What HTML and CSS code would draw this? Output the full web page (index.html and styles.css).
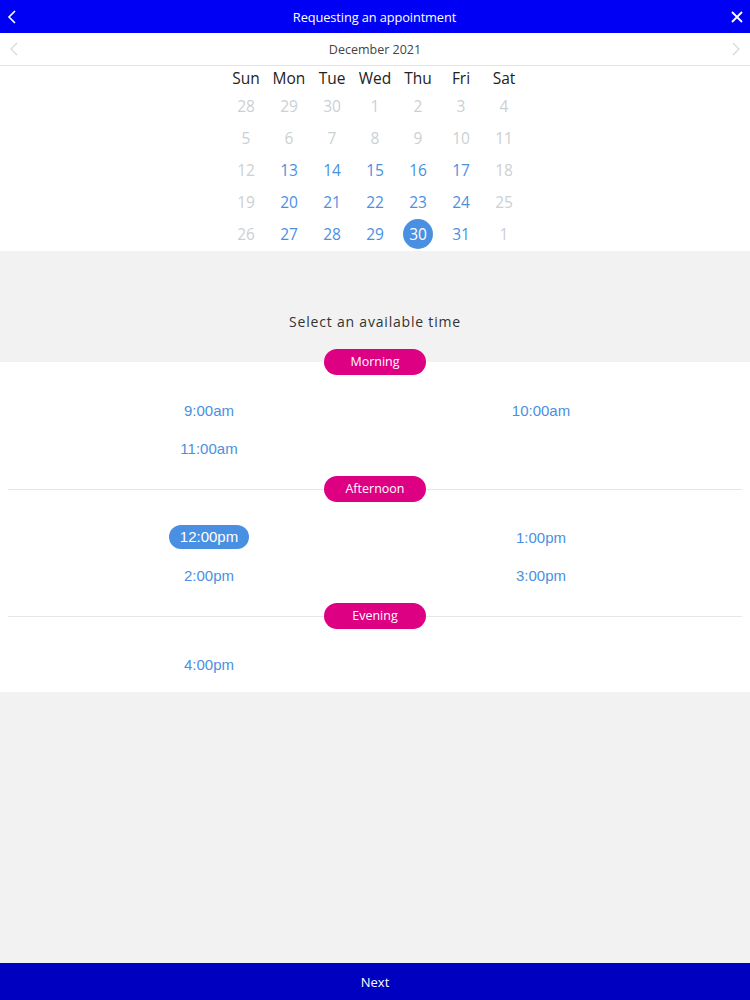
FILE: index.html
```html
<!DOCTYPE html>
<html>

<head>
    <title>Requesting an appointment</title>
    <meta charset="utf-8">
    <meta name="viewport" content="width=device-width, initial-scale=1.0">
    <link rel="stylesheet" href="styles.css">
</head>

<body>

    <header class="topbar">
        <button class="icon-btn back" aria-label="Back">
            <svg width="10" height="14" viewBox="0 0 10 14"><path d="M8 1 L2 7 L8 13" fill="none" stroke="#fff" stroke-width="1.6"/></svg>
        </button>
        <h1>Requesting an appointment</h1>
        <button class="icon-btn close" aria-label="Close">
            <svg width="12" height="12" viewBox="0 0 12 12"><path d="M1 1 L11 11 M11 1 L1 11" fill="none" stroke="#fff" stroke-width="1.8"/></svg>
        </button>
    </header>

    <div class="month-bar">
        <button class="icon-btn prev" aria-label="Previous month">
            <svg width="8" height="14" viewBox="0 0 8 14"><path d="M7 1 L1 7 L7 13" fill="none" stroke="#d3d8dc" stroke-width="1.2"/></svg>
        </button>
        <span class="month">December 2021</span>
        <button class="icon-btn next" aria-label="Next month">
            <svg width="8" height="14" viewBox="0 0 8 14"><path d="M1 1 L7 7 L1 13" fill="none" stroke="#d3d8dc" stroke-width="1.2"/></svg>
        </button>
    </div>

    <section class="calendar">
        <div class="cal-grid">
            <span class="dow">Sun</span><span class="dow">Mon</span><span class="dow">Tue</span><span class="dow">Wed</span><span class="dow">Thu</span><span class="dow">Fri</span><span class="dow">Sat</span>

            <span class="day off">28</span><span class="day off">29</span><span class="day off">30</span><span class="day off">1</span><span class="day off">2</span><span class="day off">3</span><span class="day off">4</span>
            <span class="day off">5</span><span class="day off">6</span><span class="day off">7</span><span class="day off">8</span><span class="day off">9</span><span class="day off">10</span><span class="day off">11</span>
            <span class="day off">12</span><span class="day">13</span><span class="day">14</span><span class="day">15</span><span class="day">16</span><span class="day">17</span><span class="day off">18</span>
            <span class="day off">19</span><span class="day">20</span><span class="day">21</span><span class="day">22</span><span class="day">23</span><span class="day">24</span><span class="day off">25</span>
            <span class="day off">26</span><span class="day">27</span><span class="day">28</span><span class="day">29</span><span class="day"><b class="picked">30</b></span><span class="day">31</span><span class="day off">1</span>
        </div>
    </section>

    <section class="prompt">
        <p>Select an available time</p>
    </section>

    <section class="slots">
        <div class="slot-group first">
            <div class="slot-head"><i class="line"></i><span class="period">Morning</span><i class="line"></i></div>
            <div class="slot-grid">
                <span class="time">9:00am</span>
                <span class="time">10:00am</span>
                <span class="time">11:00am</span>
            </div>
        </div>

        <div class="slot-group">
            <div class="slot-head"><i class="line"></i><span class="period">Afternoon</span><i class="line"></i></div>
            <div class="slot-grid">
                <span class="time"><b class="chosen">12:00pm</b></span>
                <span class="time">1:00pm</span>
                <span class="time">2:00pm</span>
                <span class="time">3:00pm</span>
            </div>
        </div>

        <div class="slot-group">
            <div class="slot-head"><i class="line"></i><span class="period">Evening</span><i class="line"></i></div>
            <div class="slot-grid">
                <span class="time">4:00pm</span>
            </div>
        </div>
    </section>

    <footer class="next-bar">
        <button class="next-btn">Next</button>
    </footer>

</body>

</html>
```

FILE: styles.css
```css
html,
body {
    margin: 0;
    padding: 0;
    height: 100%;
}

body {
    display: flex;
    flex-direction: column;
    background-color: #f2f2f2;
    font-family: 'Open Sans', 'Liberation Sans', sans-serif;
}

.icon-btn {
    background: none;
    border: none;
    padding: 0;
    display: flex;
    align-items: center;
    justify-content: center;
    cursor: pointer;
}

/* top bar */
.topbar {
    height: 33px;
    background-color: #0000f5;
    display: flex;
    align-items: center;
    padding: 0 6px 0 5px;
    box-sizing: border-box;
}

.topbar h1 {
    flex: 1;
    margin: 0;
    text-align: center;
    font-size: 12.8px;
    font-weight: normal;
    color: white;
    letter-spacing: -0.1px;
}

.topbar .icon-btn {
    width: 14px;
    height: 20px;
}

/* month */
.month-bar {
    height: 32px;
    background-color: white;
    border-bottom: 1px solid #e2e5e7;
    display: flex;
    align-items: center;
    padding: 0 10px;
}

.month {
    flex: 1;
    text-align: center;
    font-size: 12.5px;
    color: #444;
}

.month-bar .icon-btn {
    width: 8px;
    height: 14px;
}

/* calendar */
.calendar {
    background-color: white;
    padding-bottom: 1px;
}

.cal-grid {
    width: 301px;
    margin: 0 auto;
    display: grid;
    grid-template-columns: repeat(7, 43px);
    grid-auto-rows: 32px;
    grid-template-rows: 24px;
    text-align: center;
}

.dow {
    font-size: 15.5px;
    color: #222;
    line-height: 24px;
}

.day {
    font-size: 15.5px;
    color: #4a90e2;
    display: flex;
    align-items: center;
    justify-content: center;
}

.day.off {
    color: #cbd0d3;
}

.picked {
    font-weight: normal;
    width: 30px;
    height: 30px;
    border-radius: 50%;
    background-color: #4a90e2;
    color: white;
    display: flex;
    align-items: center;
    justify-content: center;
}

/* time picker */
.prompt {
    padding: 61px 0 30px;
}

.prompt p {
    margin: 0;
    line-height: 20px;
    text-align: center;
    font-size: 14px;
    letter-spacing: 0.8px;
    color: #333;
}

.slots {
    background-color: white;
}

.slot-group {
    padding-bottom: 9px;
}

.slot-head {
    display: flex;
    align-items: center;
    margin: 0 8px 16px;
}

.first .slot-head {
    margin-top: -13px;
}

.line {
    flex: 1;
    height: 1px;
    background-color: #e3e7e8;
}

.first .line {
    background-color: transparent;
}

.period {
    width: 102px;
    height: 26px;
    line-height: 26px;
    border-radius: 13px;
    background-color: #dd0083;
    color: white;
    font-size: 12.5px;
    text-align: center;
}

.slot-grid {
    display: grid;
    grid-template-columns: 1fr 1fr;
    grid-auto-rows: 38px;
    padding: 0 43px;
}

.time {
    display: flex;
    align-items: center;
    justify-content: center;
    font-family: 'Liberation Sans', Arial, sans-serif;
    font-size: 15px;
    color: #4a90e2;
}

.chosen {
    font-weight: normal;
    background-color: #4a90e2;
    color: white;
    height: 24px;
    line-height: 24px;
    padding: 0 11px;
    border-radius: 12px;
}

/* bottom */
.next-bar {
    margin-top: auto;
    height: 37px;
    background-color: #0000c0;
}

.next-btn {
    width: 100%;
    height: 100%;
    background: none;
    border: none;
    color: white;
    font-family: 'Open Sans', sans-serif;
    font-size: 13px;
}
```
